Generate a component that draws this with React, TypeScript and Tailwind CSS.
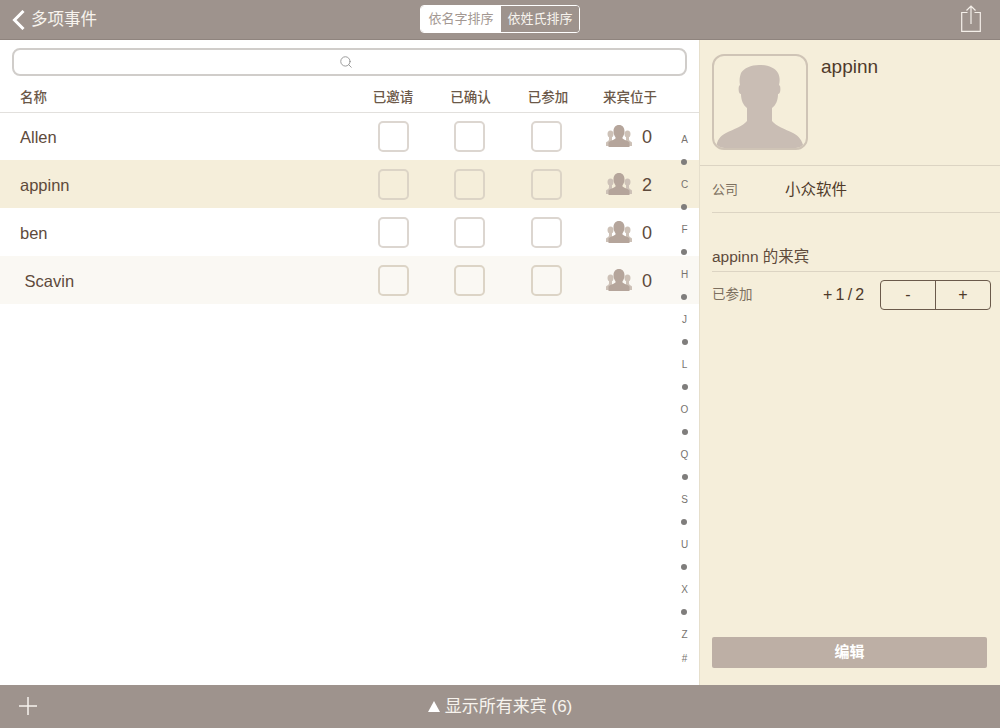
import { Search } from "lucide-react";

const FONT = "font-['Liberation_Sans','Noto_Sans_CJK_SC',sans-serif]";

const rows = [
  { name: "Allen", count: 0, bg: "bg-white", off: false },
  { name: "appinn", count: 2, bg: "bg-[#f5eeda]", off: true },
  { name: "ben", count: 0, bg: "bg-white", off: false },
  { name: " Scavin", count: 0, bg: "bg-[#faf8f3]", off: true },
];

const letters = ["A", "C", "F", "H", "J", "L", "O", "Q", "S", "U", "X"];

const GuestsIcon = () => (
  <svg width="26" height="24" viewBox="0 0 26 24" className="fill-[#b5a59b]">
    <ellipse className="fill-[#cdc1b7]" cx="4.500" cy="10" rx="3" ry="3.600" />
    <ellipse className="fill-[#cdc1b7]" cx="21.500" cy="10" rx="3" ry="3.600" />
    <path className="fill-[#cdc1b7]" d="M0 22V18.500C1 17.500 2.800 17 3 15.500V13H6V16.500H8L3 22Z" />
    <path className="fill-[#cdc1b7]" d="M26 22V18.500C25 17.500 23.200 17 23 15.500V13H20V16.500H18L23 22Z" />
    <path d="M13 1C16.500 1 18.500 3.500 18.500 7.500 18.500 10 17.500 12 16.500 13.200V14.500C18 16 22 16.800 23.500 18.500V23H2.500V18.500C4 16.800 8 16 9.500 14.500V13.200C8.500 12 7.500 10 7.500 7.500 7.500 3.500 9.500 1 13 1Z" />
  </svg>
);

const Check = ({ off }: { off: boolean }) => (
  <div className={`w-[31px] h-[31px] mt-[1px] rounded-[5px] border-[2px] ${off ? "border-[#dcd4c6]" : "border-[#dcd6d0] bg-white"}`} />
);

const Avatar = () => (
  <div className="w-[96px] h-[96px] rounded-[12px] border-[2px] border-[#cfc4b6] overflow-hidden shrink-0">
    <svg width="92" height="92" viewBox="0 0 92 92" className="fill-[#c9bdb4]">
      <path d="M2 92C3 84 6 80 12 77 20 73 29 70 33 65L33 52C29 49 27 44 27 38 25 38 24 34 25 30L26 29C25 24 26 20 27 17 30 12 37 9 45 9 54 9 61 12 64 17 66 21 66 25 65 29L66 30C67 34 66 38 64 38 64 44 62 49 58 52L58 65C62 70 71 73 79 77 85 80 88 84 90 92Z" />
    </svg>
  </div>
);

const ShareIcon = () => (
  <svg width="20" height="27" viewBox="0 0 20 27" fill="none" stroke="#f4efe9" strokeWidth="1.2" className="mb-[3px]">
    <path d="M6.500 7.500H.7v18.800h18.600V7.500h-5.800" />
    <path d="M10 19V1M5.500 5.500 10 1l4.500 4.500" />
  </svg>
);

export default function App() {
  return (
    <div className={`w-[1000px] h-[728px] flex flex-col overflow-hidden bg-white ${FONT}`}>
      {/* top bar */}
      <div className="h-[40px] shrink-0 bg-[#9e938d] border-b border-[#8f847e] relative flex items-center justify-between pl-[12px] pr-[19px]">
        <div className="flex items-center gap-[6px] text-[#f7f3ee] text-[16.500px]">
          <svg width="13" height="20" viewBox="0 0 13 20" fill="none" stroke="#fff" strokeWidth="3">
            <path d="M11.500 1 2.500 10l9 9" />
          </svg>
          <span>多项事件</span>
        </div>
        <div className="absolute left-[420px] top-[5px] w-[160px] h-[28px] flex rounded-[4px] border border-white overflow-hidden text-[13px]">
          <div className="w-[80px] bg-white text-[#a39892] flex items-center justify-center">依名字排序</div>
          <div className="flex-1 bg-[#9e938d] text-[#f7f3ee] flex items-center justify-center">依姓氏排序</div>
        </div>
        <ShareIcon />
      </div>

      <div className="flex-1 flex min-h-0">
        {/* list */}
        <div className="w-[699px] shrink-0 relative">
          <div className="px-[12px] pt-[8px]">
            <div className="h-[28px] rounded-[8px] border-[2px] border-[#d0cdca] flex items-center justify-center">
              <Search size={14} className="text-[#8f8f8f] ml-[-7px]" strokeWidth={1.500} />
            </div>
          </div>
          <div className="h-[36px] flex items-center shadow-[0_1px_0_#e2e0dd] relative pl-[20px] pt-[8px] text-[13.500px] font-medium text-[#6b5848]">
            <span className="w-[333px]">名称</span>
            <span className="w-[80px] text-center">已邀请</span>
            <span className="w-[75px] text-center">已确认</span>
            <span className="w-[80px] text-center">已参加</span>
            <span className="w-[84px] text-center">来宾位于</span>
          </div>
          {rows.map((r) => (
            <div key={r.name} className={`h-[48px] flex items-center text-[16.500px] text-[#5e4a3b] ${r.bg}`}>
              <span className="w-[353px] pl-[20px] pt-[2px] whitespace-pre">{r.name}</span>
              <div className="w-[80px] flex justify-center"><Check off={r.off} /></div>
              <div className="w-[72px] flex justify-center"><Check off={r.off} /></div>
              <div className="w-[82px] flex justify-center"><Check off={r.off} /></div>
              <div className="flex items-center pl-[19px] gap-[10px]">
                <GuestsIcon />
                <span className="text-[18px] pt-[2px]">{r.count}</span>
              </div>
            </div>
          ))}
          {/* section index */}
          <div className="absolute left-[670px] top-[88px] w-[29px] flex flex-col items-center text-[10px] text-[#77736f]">
            {letters.map((l) => (
              <div key={l} className="flex flex-col items-center">
                <span className="h-[22.500px] flex items-center">{l}</span>
                <span className="h-[22.500px] flex items-center">
                  <span className="block w-[6px] h-[6px] rounded-full bg-[#7f7d7c]" />
                </span>
              </div>
            ))}
            <span className="h-[22.500px] flex items-center">Z</span>
            <span className="h-[26px] flex items-center">#</span>
          </div>
        </div>

        {/* detail */}
        <div className="flex-1 bg-[#f5eeda] border-l border-[#e6dfcc] flex flex-col">
          <div className="h-[126px] shrink-0 flex pl-[12px] pt-[14px] gap-[13px] border-b border-[#dcd4c3]">
            <Avatar />
            <span className="text-[19px] text-[#4f3a2a] leading-[26px]">appinn</span>
          </div>
          <div className="h-[47px] shrink-0 ml-[12px] pt-[1px] flex items-center border-b border-[#dcd4c3]">
            <span className="w-[73px] text-[13px] text-[#7d7060]">公司</span>
            <span className="text-[15.500px] text-[#4f3a2a]">小众软件</span>
          </div>
          <div className="h-[59px] shrink-0 ml-[12px] flex items-end pb-[3px] border-b border-[#dcd4c3] text-[15.500px] text-[#5e4a3b]">
            appinn 的来宾
          </div>
          <div className="ml-[12px] mt-[8px] flex items-center">
            <span className="w-[111px] text-[13.500px] text-[#7d7060]">已参加</span>
            <span className="w-[57px] text-[16px] text-[#4f3a2a]">{"+\u20091\u2009/\u20092"}</span>
            <div className="w-[111px] h-[30px] flex rounded-[4px] border border-[#6b5a4b] text-[#4f3a2a] text-[16px]">
              <div className="w-[55px] flex items-center justify-center border-r border-[#6b5a4b]">-</div>
              <div className="flex-1 flex items-center justify-center">+</div>
            </div>
          </div>
          <div className="mt-auto ml-[12px] mr-[13px] mb-[17px] h-[31px] bg-[#bdafa5] rounded-[2px] flex items-center justify-center text-white text-[15px] font-bold">
            编辑
          </div>
        </div>
      </div>

      {/* bottom bar */}
      <div className="h-[43px] shrink-0 bg-[#9e938d] relative flex items-center justify-center gap-[5px] text-[#f7f3ee] text-[17px]">
        <svg width="18" height="18" viewBox="0 0 18 18" stroke="#f7f3ee" strokeWidth="1.500" className="absolute left-[19px] top-[12px]">
          <path d="M9 0v18M0 9h18" />
        </svg>
        <svg width="12" height="11" viewBox="0 0 12 11" className="fill-white">
          <path d="M6 0 12 11H0Z" />
        </svg>
        <span>显示所有来宾 (6)</span>
      </div>
    </div>
  );
}
